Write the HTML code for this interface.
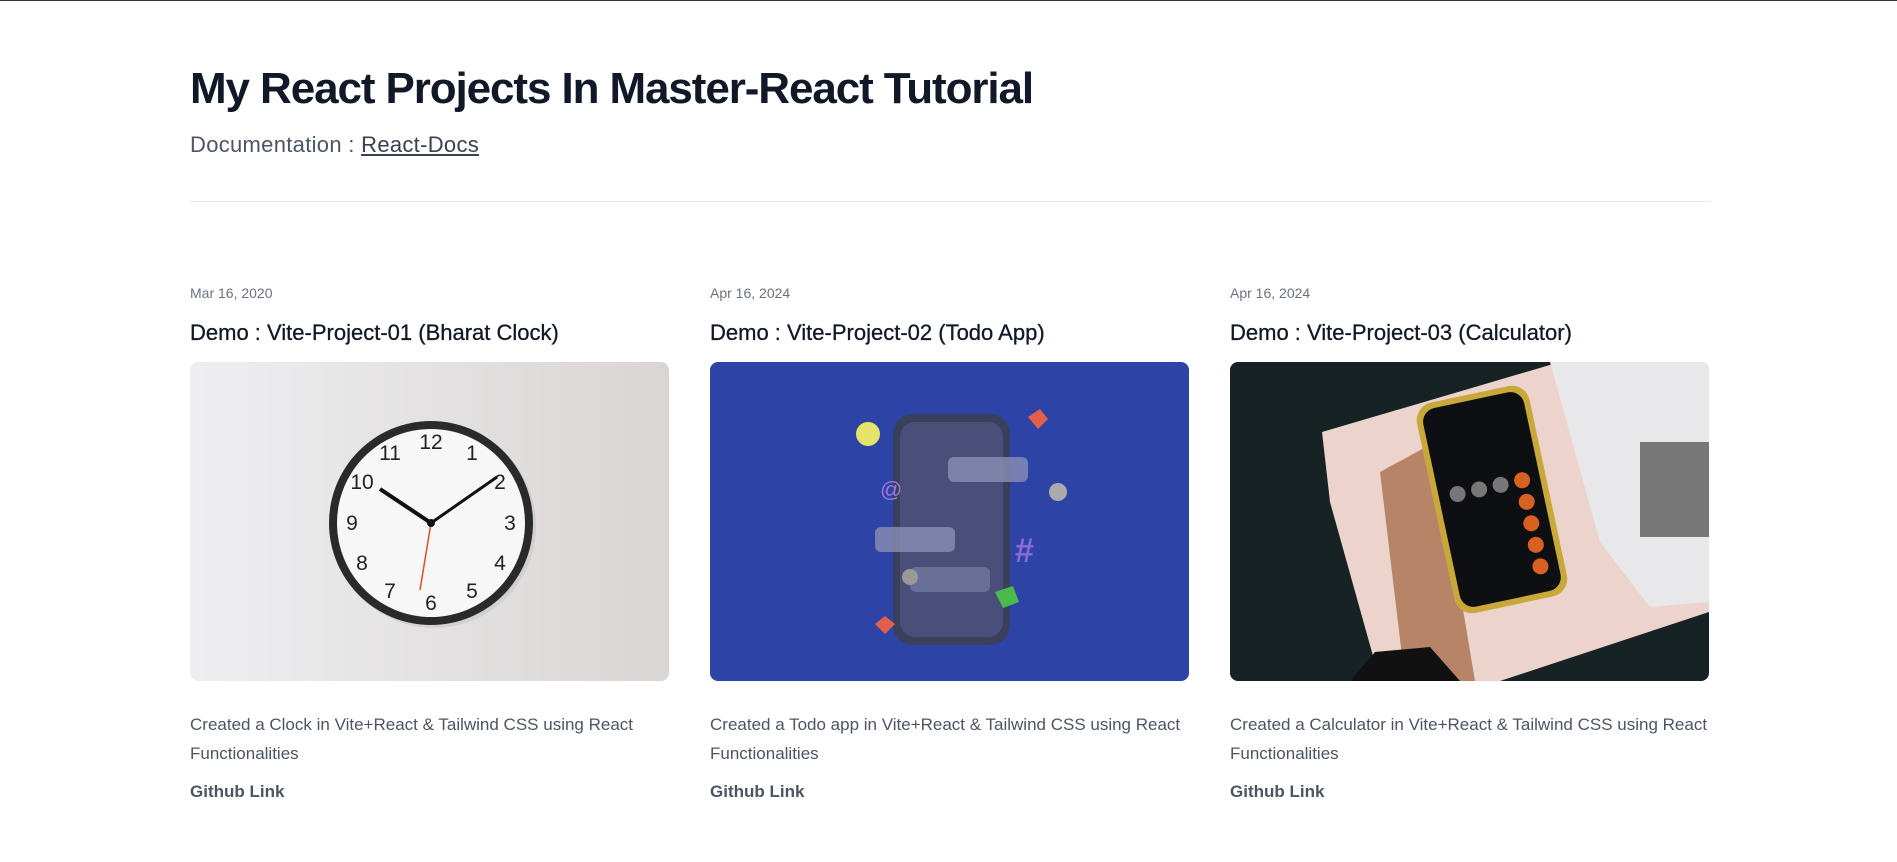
<!DOCTYPE html>
<html><head><meta charset="utf-8"><style>
*{margin:0;padding:0;box-sizing:border-box}
body{width:1897px;height:862px;background:#fff;font-family:"Liberation Sans",sans-serif;border-top:1px solid #333;overflow:hidden;position:relative}
h1{position:absolute;left:190px;top:63px;font-size:44px;font-weight:bold;color:#111827;letter-spacing:-1.1px;white-space:nowrap}
.doc{position:absolute;left:190px;top:131px;font-size:22px;color:#4b5563;letter-spacing:0.3px}
.doc a{color:#374151;text-decoration:underline}
.hr{position:absolute;left:190px;top:200px;width:1521px;height:1px;background:#e5e7eb}
.card{position:absolute;top:284px;width:479px}
.date{font-size:14px;color:#6b7280;height:20px}
.title{margin-top:15px;font-size:22px;color:#111827;height:31px;-webkit-text-stroke:0.3px #111827}
.img{margin-top:11px;width:479px;height:319px;border-radius:8px;overflow:hidden}
.img svg{display:block}
.desc{margin-top:29px;font-size:17px;line-height:29px;color:#4b5563}
.gh{margin-top:14px;font-size:17px;font-weight:bold;color:#4b5563}
</style></head><body>
<h1>My React Projects In Master-React Tutorial</h1>
<div class="doc">Documentation : <a>React-Docs</a></div>
<div class="hr"></div>

<div class="card" style="left:190px">
<div class="date">Mar 16, 2020</div>
<div class="title">Demo : Vite-Project-01 (Bharat Clock)</div>
<div class="img"><svg width="479" height="319" viewBox="0 0 479 319">
<defs><linearGradient id="g1" x1="0" x2="1"><stop offset="0" stop-color="#eeeef1"/><stop offset="1" stop-color="#d9d5d3"/></linearGradient></defs>
<rect width="479" height="319" fill="url(#g1)"/>
<circle cx="244" cy="164" r="102" fill="#bbb" opacity=".4"/>
<circle cx="241" cy="161" r="102" fill="#2a2a2a"/>
<circle cx="241" cy="161" r="94" fill="#f7f7f7"/>
<g font-family="Liberation Sans" font-size="21" fill="#222" text-anchor="middle">
<text x="241" y="87">12</text><text x="282" y="98">1</text><text x="310" y="127">2</text><text x="320" y="168">3</text><text x="310" y="208">4</text><text x="282" y="236">5</text><text x="241" y="248">6</text><text x="200" y="236">7</text><text x="172" y="208">8</text><text x="162" y="168">9</text><text x="172" y="127">10</text><text x="200" y="98">11</text></g>
<line x1="241" y1="161" x2="190" y2="127" stroke="#111" stroke-width="4"/>
<line x1="241" y1="161" x2="307" y2="115" stroke="#111" stroke-width="3"/>
<line x1="241" y1="161" x2="230" y2="228" stroke="#e05020" stroke-width="1.5"/>
<circle cx="241" cy="161" r="4" fill="#111"/>
</svg></div>
<div class="desc">Created a Clock in Vite+React &amp; Tailwind CSS using React Functionalities</div>
<div class="gh">Github Link</div>
</div>

<div class="card" style="left:710px">
<div class="date">Apr 16, 2024</div>
<div class="title">Demo : Vite-Project-02 (Todo App)</div>
<div class="img"><svg width="479" height="319" viewBox="0 0 479 319">
<rect width="479" height="319" fill="#2d43a6"/>
<rect x="183" y="52" width="117" height="231" rx="20" fill="#3a3f5c"/>
<rect x="190" y="60" width="103" height="215" rx="15" fill="#4a4f7a"/>
<rect x="238" y="95" width="80" height="25" rx="6" fill="#8a8fb4" opacity=".8"/>
<rect x="165" y="165" width="80" height="25" rx="6" fill="#8a8fb4" opacity=".8"/>
<rect x="200" y="205" width="80" height="25" rx="6" fill="#6a6f98"/>
<circle cx="158" cy="72" r="12" fill="#e4e46a"/>
<path d="M318 55 l12 -8 l8 10 l-10 10z" fill="#e2604a"/>
<path d="M165 262 l10 -8 l10 8 l-10 10z" fill="#e2604a"/>
<text x="170" y="135" font-size="22" fill="#9b7ad8" font-family="Liberation Sans">@</text>
<text x="305" y="200" font-size="34" fill="#8a6ad8" font-weight="bold" font-family="Liberation Sans">#</text>
<circle cx="348" cy="130" r="9" fill="#aaa"/>
<circle cx="200" cy="215" r="8" fill="#999"/>
<path d="M285 230 l18 -6 l6 16 l-16 6z" fill="#4bbb4b"/>
</svg></div>
<div class="desc">Created a Todo app in Vite+React &amp; Tailwind CSS using React Functionalities</div>
<div class="gh">Github Link</div>
</div>

<div class="card" style="left:1230px">
<div class="date">Apr 16, 2024</div>
<div class="title">Demo : Vite-Project-03 (Calculator)</div>
<div class="img"><svg width="479" height="319" viewBox="0 0 479 319">
<rect width="479" height="319" fill="#162224"/>
<path d="M92 70 L330 0 L479 0 L479 250 L270 319 L150 319 L100 140z" fill="#ecd4cc"/>
<path d="M320 0 L479 0 L479 240 L420 245 L370 180z" fill="#e8e8ea"/>
<rect x="410" y="80" width="69" height="95" fill="#777"/>
<path d="M150 110 L175 319 L245 319 L205 80z" fill="#b88468"/>
<path d="M120 319 L145 290 L200 285 L230 319z" fill="#111"/>
<g transform="rotate(-12 262 140)">
<rect x="205" y="30" width="115" height="215" rx="18" fill="#c8a838"/>
<rect x="211" y="36" width="103" height="203" rx="14" fill="#0d0f12"/>
<g fill="#777"><circle cx="230" cy="125" r="8"/><circle cx="252" cy="125" r="8"/><circle cx="274" cy="125" r="8"/></g>
<g fill="#d86020"><circle cx="296" cy="125" r="8"/><circle cx="296" cy="147" r="8"/><circle cx="296" cy="169" r="8"/><circle cx="296" cy="191" r="8"/><circle cx="296" cy="213" r="8"/></g>
</g>
</svg></div>
<div class="desc">Created a Calculator in Vite+React &amp; Tailwind CSS using React Functionalities</div>
<div class="gh">Github Link</div>
</div>
</body></html>
